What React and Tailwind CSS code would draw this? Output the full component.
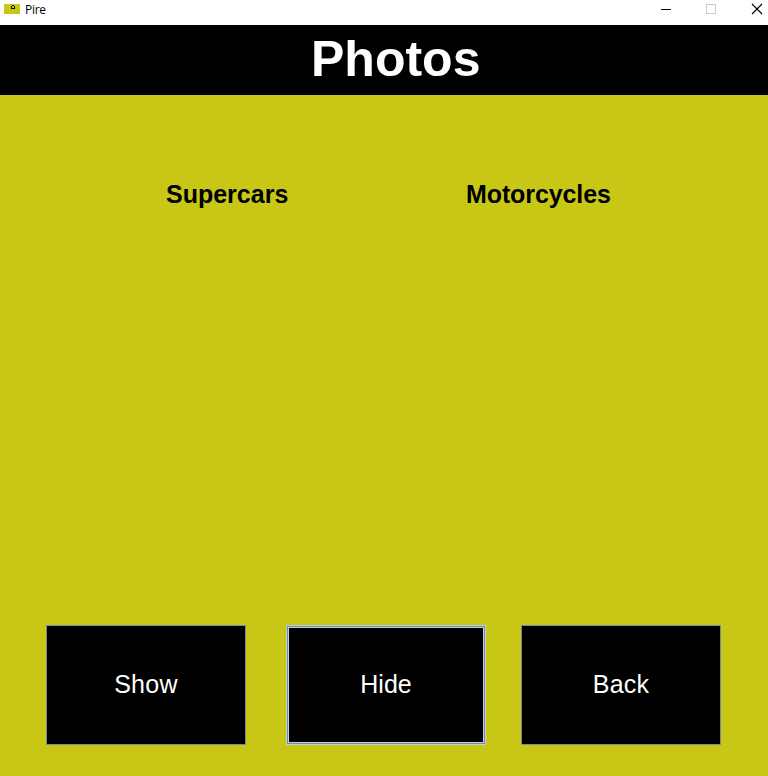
import React from 'react';

function TitleBar() {
  return (
    <div className="flex h-[25px] w-full bg-white pl-[4px] text-black">
      <svg className="mt-[4px] h-[10px] w-[16px]" viewBox="0 0 16 10" shapeRendering="crispEdges">
        <rect width="16" height="10" fill="#c8c715" />
        <path d="M8 1h2v1h-2zM7 2h1v2h-1zM10 2h1v2h-1zM7 4h4v1h-4z" fill="#111" />
      </svg>
      <span className="ml-[5px] mt-[2px] font-['Open_Sans',sans-serif] text-[12px] leading-[16px] tracking-[-0.3px]">Pire</span>
      <svg className="ml-auto h-[25px] w-[108px]" viewBox="0 0 108 25" fill="none">
        <path d="M1 9.5h10" stroke="#000" />
        <rect x="46.5" y="4.5" width="9" height="9" stroke="#ccc" />
        <path d="M92 4l10 10M102 4l-10 10" stroke="#000" strokeWidth="1.1" />
      </svg>
    </div>
  );
}

function PanelButton({ children, focused, className = '' }) {
  return (
    <button
      className={`h-[120px] w-[200px] border bg-black text-[25px] text-white ${
        focused
          ? 'border-[#b8cfe5] shadow-[inset_0_0_0_1px_#7a8a99,inset_0_0_0_2px_#b8cfe5]'
          : 'border-[#7a8a99]'
      } ${className}`}
    >
      {children}
    </button>
  );
}

export default function App() {
  return (
    <div className="flex h-[776px] w-[768px] flex-col overflow-hidden bg-[#c8c715] font-['Liberation_Sans',Arial,sans-serif]">
      <TitleBar />
      <h1 className="h-[70px] bg-black pl-[311px] text-[50px] font-bold leading-[69px] text-white">Photos</h1>
      <div className="flex pt-[84px] text-[25px] font-bold leading-[30px] text-black">
        <h2 className="ml-[166px] w-[300px]">Supercars</h2>
        <h2 className="tracking-[-0.1px]">Motorcycles</h2>
      </div>
      <div className="mt-auto flex pb-[31px] pl-[46px]">
        <PanelButton><span className="tracking-[0.3px]">Show</span></PanelButton>
        <PanelButton focused className="ml-[40px]">Hide</PanelButton>
        <PanelButton className="ml-[35px]"><span className="tracking-[0.2px]">Back</span></PanelButton>
      </div>
    </div>
  );
}
